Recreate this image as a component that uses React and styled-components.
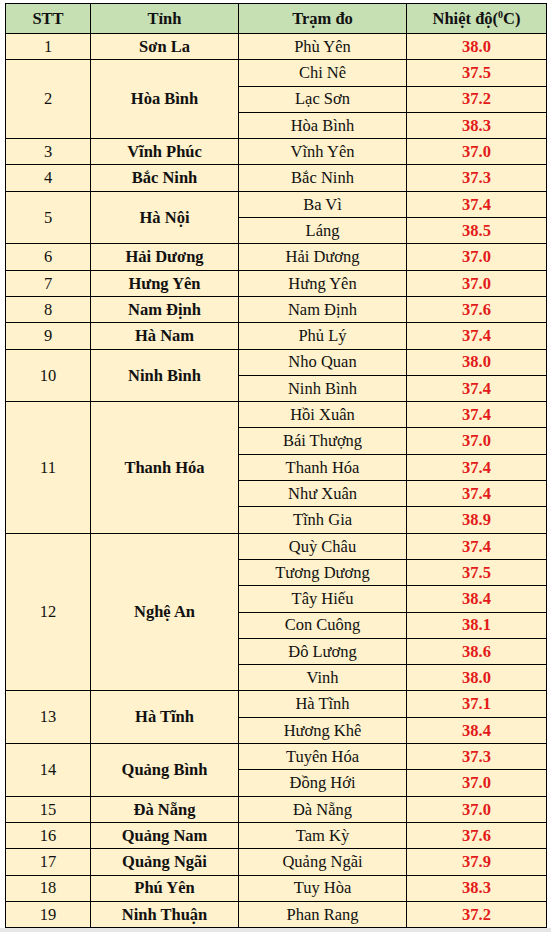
import React from 'react';
import styled, {createGlobalStyle} from 'styled-components';

const GlobalStyle = createGlobalStyle`
    html, body {
        margin: 0;
        padding: 0;
        background: #ffffff;
    }
    body {
        font-family: "Liberation Serif", "Times New Roman", serif;
    }
`;

const Page = styled.div`
    width: 551px;
    height: 932px;
    padding: 3px 5px 0 5px;
    box-sizing: border-box;
    background: #ffffff;
    border-bottom: 4px solid #e6e6e6;
`;

const Table = styled.table`
    width: 541px;
    border-collapse: collapse;
    table-layout: fixed;
    font-size: 16.5px;
    color: #111;
    border: 1.5px solid #000;
`;

const HeadCell = styled.th`
    background: #c6e0b4;
    border: 1px solid #000;
    height: 28px;
    padding: 1px 0 0 0;
    font-weight: bold;
    text-align: center;
    vertical-align: middle;

    & sup {
        font-size: 10px;
        line-height: 0;
    }
`;

const Row = styled.tr`
    height: 26.3px;
`;

const Cell = styled.td`
    background: #fff2cc;
    border: 1px solid #000;
    padding: 1px 0 0 0;
    text-align: center;
    vertical-align: middle;
    line-height: 1;
    font-weight: ${({bold}) => (bold ? 'bold' : 'normal')};
    color: ${({hot}) => (hot ? '#e31a1a' : '#111')};
`;

const data = [
    ['Sơn La', [['Phù Yên', '38.0']]],
    ['Hòa Bình', [['Chi Nê', '37.5'], ['Lạc Sơn', '37.2'], ['Hòa Bình', '38.3']]],
    ['Vĩnh Phúc', [['Vĩnh Yên', '37.0']]],
    ['Bắc Ninh', [['Bắc Ninh', '37.3']]],
    ['Hà Nội', [['Ba Vì', '37.4'], ['Láng', '38.5']]],
    ['Hải Dương', [['Hải Dương', '37.0']]],
    ['Hưng Yên', [['Hưng Yên', '37.0']]],
    ['Nam Định', [['Nam Định', '37.6']]],
    ['Hà Nam', [['Phủ Lý', '37.4']]],
    ['Ninh Bình', [['Nho Quan', '38.0'], ['Ninh Bình', '37.4']]],
    ['Thanh Hóa', [['Hồi Xuân', '37.4'], ['Bái Thượng', '37.0'], ['Thanh Hóa', '37.4'], ['Như Xuân', '37.4'], ['Tĩnh Gia', '38.9']]],
    ['Nghệ An', [['Quỳ Châu', '37.4'], ['Tương Dương', '37.5'], ['Tây Hiếu', '38.4'], ['Con Cuông', '38.1'], ['Đô Lương', '38.6'], ['Vinh', '38.0']]],
    ['Hà Tĩnh', [['Hà Tĩnh', '37.1'], ['Hương Khê', '38.4']]],
    ['Quảng Bình', [['Tuyên Hóa', '37.3'], ['Đồng Hới', '37.0']]],
    ['Đà Nẵng', [['Đà Nẵng', '37.0']]],
    ['Quảng Nam', [['Tam Kỳ', '37.6']]],
    ['Quảng Ngãi', [['Quảng Ngãi', '37.9']]],
    ['Phú Yên', [['Tuy Hòa', '38.3']]],
    ['Ninh Thuận', [['Phan Rang', '37.2']]],
];

const App = () => {
    return (
        <Page>
            <GlobalStyle />
            <Table>
                <colgroup>
                    <col style={{width: 85}} />
                    <col style={{width: 148}} />
                    <col style={{width: 168}} />
                    <col style={{width: 140}} />
                </colgroup>
                <thead>
                    <tr>
                        <HeadCell>STT</HeadCell>
                        <HeadCell>Tỉnh</HeadCell>
                        <HeadCell>Trạm đo</HeadCell>
                        <HeadCell>Nhiệt độ(<sup>0</sup>C)</HeadCell>
                    </tr>
                </thead>
                <tbody>
                    {data.map(([province, stations], i) =>
                        stations.map(([station, temp], j) => (
                            <Row key={`${i}-${j}`}>
                                {j === 0 && <Cell rowSpan={stations.length}>{i + 1}</Cell>}
                                {j === 0 && <Cell bold rowSpan={stations.length}>{province}</Cell>}
                                <Cell>{station}</Cell>
                                <Cell bold hot>{temp}</Cell>
                            </Row>
                        ))
                    )}
                </tbody>
            </Table>
        </Page>
    );
}

export default App;
